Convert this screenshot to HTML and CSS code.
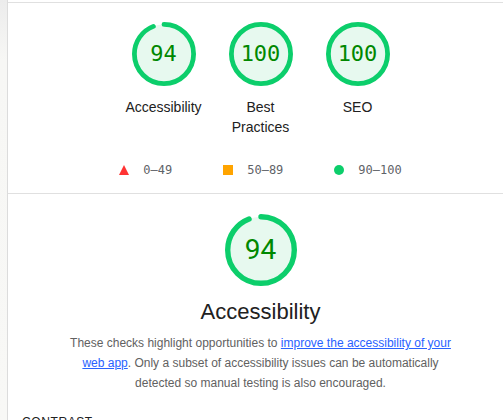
FILE: index.html
```html
<!DOCTYPE html>
<html>
<head>
<meta charset="utf-8">
<link rel="stylesheet" href="styles.css">
</head>
<body>
<div class="page">
  <div class="sidebar"></div>
  <main class="main">
    <section class="summary">
      <div class="gauges">
        <div class="gauge-item">
          <div class="gauge gauge-sm">
            <svg viewBox="0 0 120 120" class="gauge-svg">
              <circle class="gauge-base" cx="60" cy="60" r="55.5"></circle>
              <circle class="gauge-arc" cx="60" cy="60" r="55.5" style="stroke-dasharray: 327.8 348.7"></circle>
            </svg>
            <span class="gauge-num mono">94</span>
          </div>
          <div class="gauge-label">Accessibility</div>
        </div>
        <div class="gauge-item">
          <div class="gauge gauge-sm">
            <svg viewBox="0 0 120 120" class="gauge-svg">
              <circle class="gauge-base" cx="60" cy="60" r="55.5"></circle>
              <circle class="gauge-arc" cx="60" cy="60" r="55.5" style="stroke-dasharray: 348.7 348.7"></circle>
            </svg>
            <span class="gauge-num mono">100</span>
          </div>
          <div class="gauge-label">Best Practices</div>
        </div>
        <div class="gauge-item">
          <div class="gauge gauge-sm">
            <svg viewBox="0 0 120 120" class="gauge-svg">
              <circle class="gauge-base" cx="60" cy="60" r="55.5"></circle>
              <circle class="gauge-arc" cx="60" cy="60" r="55.5" style="stroke-dasharray: 348.7 348.7"></circle>
            </svg>
            <span class="gauge-num mono">100</span>
          </div>
          <div class="gauge-label">SEO</div>
        </div>
      </div>
      <div class="legend">
        <div class="legend-item"><span class="shape tri"></span><span class="mono">0–49</span></div>
        <div class="legend-item"><span class="shape sq"></span><span class="mono">50–89</span></div>
        <div class="legend-item"><span class="shape dot"></span><span class="mono">90–100</span></div>
      </div>
    </section>
    <section class="category">
      <div class="gauge gauge-lg">
        <svg viewBox="0 0 120 120" class="gauge-svg">
          <circle class="gauge-base" cx="60" cy="60" r="55.5"></circle>
          <circle class="gauge-arc" cx="60" cy="60" r="55.5" style="stroke-dasharray: 327.8 348.7"></circle>
        </svg>
        <span class="gauge-num big">94</span>
      </div>
      <h2 class="cat-title">Accessibility</h2>
      <p class="cat-desc">These checks highlight opportunities to <a href="#">improve the accessibility of your web app</a>. Only a subset of accessibility issues can be automatically detected so manual testing is also encouraged.</p>
      <div class="group-title">Contrast</div>
    </section>
  </main>
</div>
</body>
</html>
```

FILE: styles.css
```css
html, body {
  margin: 0;
  padding: 0;
  background: #fff;
  overflow: hidden;
}
body {
  font-family: "Liberation Sans", Arial, sans-serif;
  color: #212121;
}
.page {
  display: flex;
  height: 420px;
}
.sidebar {
  width: 7px;
  flex: none;
  background: linear-gradient(#ececec, #f7f7f5 60px, #f8f8f6);
  border-right: 1px solid #dcdcdc;
}
.main {
  flex: 1;
  margin-top: 2px;
  border-top: 1px solid #e0e0e0;
  padding-left: 10px;
}
.mono {
  font-family: "DejaVu Sans Mono", monospace;
}
.summary {
  padding-top: 19px;
  padding-bottom: 15px;
  border-bottom: 1px solid #e0e0e0;
  margin-left: -10px;
  padding-left: 10px;
}
.gauges {
  display: flex;
  justify-content: center;
}
.gauge-item {
  width: 97px;
  display: flex;
  flex-direction: column;
  align-items: center;
}
.gauge {
  position: relative;
  display: flex;
  align-items: center;
  justify-content: center;
}
.gauge-sm {
  width: 64px;
  height: 64px;
}
.gauge-lg {
  width: 72px;
  height: 72px;
}
.gauge-svg {
  position: absolute;
  inset: 0;
  width: 100%;
  height: 100%;
  transform: rotate(-90deg);
}
.gauge-base {
  fill: #e7f9ef;
  stroke: none;
}
.gauge-arc {
  fill: none;
  stroke: #0cce6b;
  stroke-width: 9;
  stroke-linecap: round;
}
.gauge-num {
  position: relative;
  color: #008800;
  font-size: 22px;
  line-height: 1;
}
.gauge-num.big {
  font-family: Roboto, "Liberation Sans", sans-serif;
  font-size: 28px;
}
.gauge-label {
  margin-top: 11px;
  font-size: 14px;
  line-height: 20px;
  text-align: center;
  width: 80px;
}
.legend {
  display: flex;
  justify-content: center;
  gap: 51px;
  margin-top: 25px;
  font-size: 12px;
  line-height: 16px;
  color: #5f6368;
}
.legend-item {
  display: flex;
  align-items: center;
  gap: 14px;
}
.shape {
  display: inline-block;
  width: 10px;
  height: 10px;
}
.tri {
  width: 0;
  height: 0;
  border-left: 5px solid transparent;
  border-right: 5px solid transparent;
  border-bottom: 10px solid #ff3333;
}
.sq {
  background: #ffa400;
}
.dot {
  background: #0cce6b;
  border-radius: 50%;
}
.category {
  display: flex;
  flex-direction: column;
  align-items: center;
  padding-top: 20px;
}
.cat-title {
  margin: 12px 0 0;
  font-size: 22px;
  font-weight: normal;
  line-height: 28px;
  color: #212121;
}
.cat-desc {
  margin: 7px 0 0;
  max-width: 400px;
  text-align: center;
  font-size: 12px;
  line-height: 20px;
  color: #616161;
}
.cat-desc a {
  color: #2962ff;
  text-decoration: underline;
}
.group-title {
  align-self: flex-start;
  margin: 21px 0 0 4px;
  font-size: 12px;
  line-height: 16px;
  text-transform: uppercase;
  letter-spacing: 0.6px;
  color: #212121;
}
```
